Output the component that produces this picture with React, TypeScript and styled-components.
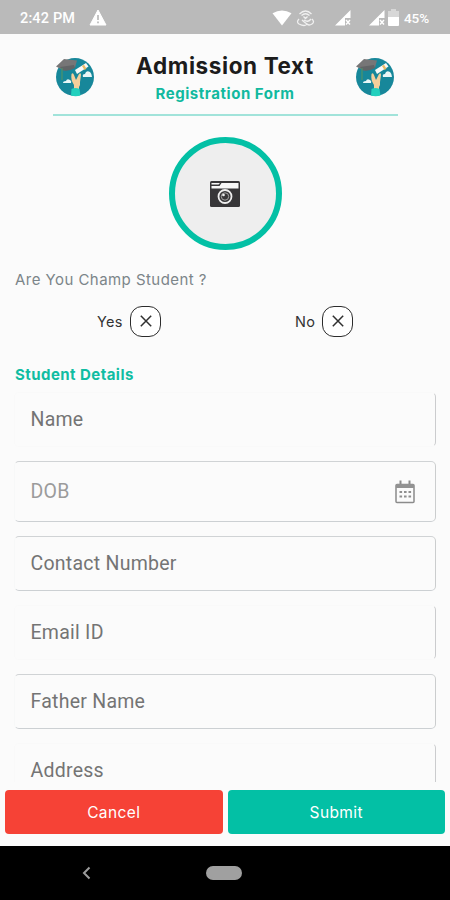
import React from "react";
import styled, { createGlobalStyle } from "styled-components";

const Global = createGlobalStyle`
  * { box-sizing: border-box; }
  body { margin: 0; background: #fbfbfb; }
`;

const teal = "#03c0a5";

const Screen = styled.div`
  width: 450px;
  height: 900px;
  display: flex;
  flex-direction: column;
  overflow: hidden;
  background: #fbfbfb;
  font-family: Inter, sans-serif;
  white-space: nowrap;
`;

const StatusBar = styled.div`
  height: 34px;
  flex: none;
  background: #bababa;
  color: #fff;
  display: flex;
  align-items: center;
  padding: 1px 20px 0 20px;
  font: 500 14.5px/20px Roboto, sans-serif;
`;

const Clock = styled.span`
  width: 69px;
  letter-spacing: 0.15px;
  padding-top: 2px;
`;

const StatusIcons = styled.div`
  margin-left: auto;
  display: flex;
  align-items: center;
`;

const Glyph = styled.svg<{ $gap?: number }>`
  display: block;
  flex: none;
  margin-left: ${(p) => p.$gap ?? 0}px;
`;

const Battery = styled.span`
  width: 26px;
  margin-left: 5px;
  font-size: 13.5px;
  padding-top: 1px;
  letter-spacing: -0.1px;
`;

const Header = styled.header`
  height: 82px;
  flex: none;
  width: 345px;
  margin-left: 53px;
  border-bottom: 2px solid #a1e3da;
  display: flex;
  justify-content: space-between;
  padding: 23px 3px 0 2px;
`;

const Titles = styled.div`
  text-align: center;
  margin-top: -6px;
`;

const Title = styled.h1`
  margin: 0;
  font-size: 22.5px;
  line-height: 30px;
  font-weight: 650;
  letter-spacing: 0.6px;
  color: #1c1c1c;
`;

const Subtitle = styled.div`
  font-size: 15px;
  line-height: 25px;
  font-weight: 650;
  letter-spacing: 0.55px;
  color: #11b99f;
`;

const Photo = styled.div`
  width: 113px;
  height: 113px;
  flex: none;
  margin: 21px 0 0 168.5px;
  border: 6px solid ${teal};
  border-radius: 50%;
  background: #eeeeee;
  display: flex;
  align-items: center;
  justify-content: center;
`;

const Question = styled.div`
  height: 24px;
  flex: none;
  margin: 18px 0 0 15px;
  font-size: 15px;
  line-height: 24px;
  letter-spacing: 0.45px;
  color: #7c8589;
`;

const Choices = styled.div`
  display: flex;
  height: 32px;
  flex: none;
  margin-top: 13px;
`;

const Choice = styled.div<{ $left: number; $width: number }>`
  margin-left: ${(p) => p.$left}px;
  width: ${(p) => p.$width}px;
  display: flex;
  align-items: center;
  justify-content: space-between;
  font-size: 14.5px;
  letter-spacing: 0.3px;
  color: #333;
`;

const CheckBox = styled.div`
  width: 31px;
  height: 31px;
  border: 1.5px solid #2c2c2c;
  border-radius: 12px;
  background: #fff;
  display: flex;
  align-items: center;
  justify-content: center;
`;

const SectionTitle = styled.h2`
  height: 24px;
  flex: none;
  margin: 26px 0 0 15px;
  font-size: 15px;
  line-height: 24px;
  font-weight: 650;
  letter-spacing: 0.45px;
  color: #10bda2;
`;

const Fields = styled.div`
  height: 390px;
  flex: none;
  margin: 5px 14px 0 14px;
  display: flex;
  flex-direction: column;
  gap: 14px;
  overflow: hidden;
`;

const Field = styled.div<{ $open?: boolean; $tall?: boolean }>`
  height: ${(p) => (p.$tall ? 61 : 55)}px;
  flex: none;
  border: 1px solid;
  border-color: ${(p) => (p.$open ? "#f9f9f9 #cbccce #f9f9f9 #f9f9f9" : "#d0d3d5 #cbcdce #ccd0d3 #f7f8f8")};
  border-radius: 5px;
  display: flex;
  align-items: center;
  justify-content: space-between;
  padding: 0 18px 0 15.5px;
  font: 400 19.5px/24px Roboto, sans-serif;
  letter-spacing: 0.25px;
  color: ${(p) => (p.$tall ? "#9b9b9b" : "#747474")};
`;

const Actions = styled.div`
  height: 64px;
  flex: none;
  margin-top: auto;
  padding: 8px 5px 12px;
  display: flex;
  gap: 5px;
`;

const Button = styled.button<{ $bg: string }>`
  flex: 1;
  border: 0;
  border-radius: 4px;
  background: ${(p) => p.$bg};
  color: #fff;
  font: 400 15.5px Inter, sans-serif;
  letter-spacing: 0.4px;
`;

const NavBar = styled.div`
  height: 54px;
  flex: none;
  background: #000;
  display: flex;
  align-items: center;
`;

const HomePill = styled.div`
  width: 36px;
  height: 14px;
  margin-left: 115px;
  border-radius: 7px;
  background: #a0a0a0;
`;

const Emblem = () => (
  <Glyph width="40" height="40" viewBox="0 0 40 40">
    <circle cx="20" cy="20" r="19" fill="#17879a" />
    <path d="M8 26q0-2 3-2q1-3 4-1q2 1 1 3zM28 20q-1-3 2-3q1-4 5-2q2 2 2 5z" fill="#eaf7f7" />
    <path d="M20 13L31 6L33.500 9.500L22 17z" fill="#f8faf8" />
    <path d="M27 9l2.500 4l2-1.300l-2.500-4z" fill="#e8ba65" />
    <path d="M16.500 17q1.500-2 2.500 1l2 5l3-6q2-2 2 1l-1 7q.5 3-1 5v4h-5v-6q-3.500-5-2.500-11z" fill="#f3cf9b" />
    <path d="M16.500 32q4-2 8 0l1 6.500q-5 1.500-9.500 0z" fill="#22d0bd" />
    <path d="M1 9.500L9 2l13 1.500l-2 7l-11 3z" fill="#777677" />
    <path d="M5 10l14-2l1 3q-7 4-13 2z" fill="#626466" />
    <path d="M7 11v12" stroke="#4f9369" strokeWidth="1.2" />
  </Glyph>
);

const Warning = () => (
  <Glyph width="18" height="17" viewBox="0 0 18 17">
    <path d="M9 1L17 16H1z" fill="#fff" stroke="#fff" strokeLinejoin="round" />
    <path d="M9 6v5M9 12.5v1.7" stroke="#bababa" strokeWidth="1.7" />
  </Glyph>
);

const Wifi = () => (
  <Glyph width="20" height="16" viewBox="0 0 20 16">
    <path d="M.5 3.2Q10-2 19.5 3.2L10 15.5z" fill="#fff" />
  </Glyph>
);

const Hotspot = () => (
  <Glyph $gap={4} width="19" height="18" viewBox="0 0 19 18" fill="none" stroke="#f0f0f0" strokeWidth="1.3">
    <path d="M3.500 5q6-6 12 0M5.500 6.500q4-3.500 8 0M7.500 7.500l2 2l2-2M3 10q-3 3 0 5q6 3 8 0q-3-2-5-4M16 10q3 3 0 5q-3 2-5 0M8 11q4 3 7-1" />
  </Glyph>
);

const Signal = ({ gap }: { gap: number }) => (
  <Glyph $gap={gap} width="16" height="16" viewBox="0 0 16 16">
    <path d="M0 15.500L15.500 0V8H10V15.500z" fill="#fff" />
    <path d="M11 10l4 4.500M15 10l-4 4.500" stroke="#fff" strokeWidth="1.400" />
  </Glyph>
);

const BatteryIcon = () => (
  <Glyph $gap={3} width="11" height="17" viewBox="0 0 11 17">
    <path d="M3 0h5v2h3v7H0V2h3z" fill="#d7d7d7" />
    <path d="M0 8h11v8q0 1-1 1H1q-1 0-1-1z" fill="#fff" />
  </Glyph>
);

const Camera = () => (
  <Glyph width="32" height="28" viewBox="0 0 32 28">
    <rect x="1" y="1" width="30" height="26" rx="1.500" fill="#373638" />
    <path d="M2.500 3h8.500L9.500 4.500h-7zM12.500 3h17v5.500h-27V6h8z" fill="#f7f7f7" />
    <circle cx="16" cy="16.500" r="6.500" fill="#373638" stroke="#eee" strokeWidth="1.800" />
    <circle cx="16" cy="16.500" r="3.700" fill="#373638" stroke="#a5a5a5" strokeWidth="1" />
    <circle cx="14.500" cy="15" r="1.300" fill="#eee" />
  </Glyph>
);

const Cross = () => (
  <Glyph width="12" height="12" viewBox="0 0 12 12">
    <path d="M.8.8l10.400 10.400M11.200.8L.8 11.200" stroke="#303030" strokeWidth="1.500" />
  </Glyph>
);

const Calendar = () => (
  <Glyph width="24" height="24" viewBox="0 0 24 24">
    <path d="M4 4.500h16q1 0 1 1v16q0 1-1 1H4q-1 0-1-1v-16q0-1 1-1z" fill="none" stroke="#8b8b8b" strokeWidth="1.500" />
    <path d="M7.500 .5V5M16.500 .5V5" stroke="#8b8b8b" strokeWidth="2" />
    <path d="M3 4h18v4H3z" fill="#929292" />
    <path d="M6.500 12h12M6.500 16.500h12" stroke="#8f8f8f" strokeWidth="2.200" strokeDasharray="2.600 1.900" />
  </Glyph>
);

const Back = () => (
  <Glyph $gap={82} width="9" height="14" viewBox="0 0 9 14">
    <path d="M7.500 1.500L2 7l5.500 5.500" fill="none" stroke="#9c9c9c" strokeWidth="2" />
  </Glyph>
);

export default function App() {
  return (
    <Screen>
      <Global />
      <StatusBar>
        <Clock>2:42 PM</Clock>
        <Warning />
        <StatusIcons>
          <Wifi />
          <Hotspot />
          <Signal gap={20} />
          <Signal gap={18} />
          <BatteryIcon />
          <Battery>45%</Battery>
        </StatusIcons>
      </StatusBar>
      <Header>
        <Emblem />
        <Titles>
          <Title>Admission Text</Title>
          <Subtitle>Registration Form</Subtitle>
        </Titles>
        <Emblem />
      </Header>
      <Photo>
        <Camera />
      </Photo>
      <Question>Are You Champ Student ?</Question>
      <Choices>
        <Choice $left={97} $width={64}>
          Yes
          <CheckBox><Cross /></CheckBox>
        </Choice>
        <Choice $left={134} $width={58}>
          No
          <CheckBox><Cross /></CheckBox>
        </Choice>
      </Choices>
      <SectionTitle>Student Details</SectionTitle>
      <Fields>
        <Field $open>Name</Field>
        <Field $tall>
          DOB
          <Calendar />
        </Field>
        <Field>Contact Number</Field>
        <Field $open>Email ID</Field>
        <Field>Father Name</Field>
        <Field $open>Address</Field>
      </Fields>
      <Actions>
        <Button $bg="#f64236">Cancel</Button>
        <Button $bg={teal}>Submit</Button>
      </Actions>
      <NavBar>
        <Back />
        <HomePill />
      </NavBar>
    </Screen>
  );
}
